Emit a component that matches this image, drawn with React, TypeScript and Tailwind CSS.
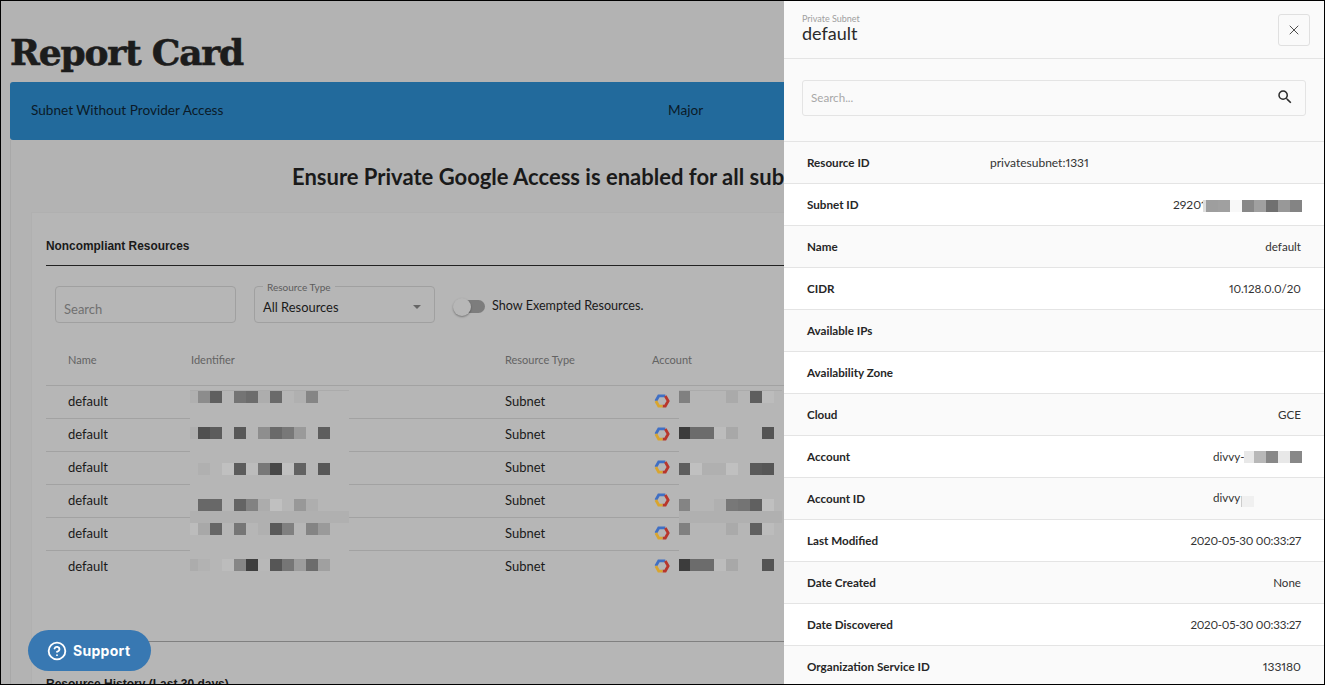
import { CircleHelp, X } from "lucide-react";
import { MdSearch } from "react-icons/md";

const LATO = "font-['Lato',sans-serif]";

// 8px lead block + 12px blocks; "" leaves a gap
const ID_ROWS = [
  { mt: "mt-[4px]", line: true, band: false, cells: ["#b0b0b0", "#8c8c8c", "#5f5f5f", "", "#747474", "#6c6c6c", "#adadad", "#6a6a6a", "", "#b0b0b0", "#858585"] },
  { mt: "mt-[8px]", line: false, band: false, cells: ["#b0b0b0", "#505050", "#5c5c5c", "", "#585858", "", "#8e8e8e", "#6a6a6a", "#787878", "#9a9a9a", "", "#5e5e5e"] },
  { mt: "mt-[11px]", line: false, band: false, cells: ["", "#b0b0b0", "", "#c0c0c0", "#5c5c5c", "#bcbcbc", "#787878", "#484848", "#c0c0c0", "#626262", "", "#585858"] },
  { mt: "mt-[14px]", line: false, band: true, cells: ["", "#686868", "#686868", "", "#646464", "#828282", "#acacac", "#c0c0c0", "", "#989898", "#aeaeae"] },
  { mt: "mt-[5px]", line: false, band: false, cells: ["#bcbcbc", "#a8a8a8", "#666666", "", "#767676", "", "#b0b0b0", "#5a5a5a", "#808080", "", "#848484", "#9a9a9a"] },
  { mt: "mt-[8px]", line: false, band: false, cells: ["#acacac", "#b2b2b2", "", "#bcbcbc", "#868686", "#3e3e3e", "#b8b8b8", "#565656", "#767676", "#9c9c9c", "#6c6c6c", "#a0a0a0"] },
];

const ACCOUNT_ROWS = [
  ["#808080", "", "", "", "#aaaaaa", "", "#5e5e5e", "#bcbcbc"],
  ["#3c3c3c", "#6c6c6c", "#6c6c6c", "#bcbcbc", "#a8a8a8", "", "", "#545454"],
  ["#5e5e5e", "#c0c0c0", "#b0b0b0", "#b0b0b0", "#c0c0c0", "", "#5a5a5a", "#565656"],
  ["#848484", "", "", "#b0b0b0", "#787878", "#747474", "#606060", "#c0c0c0"],
  ["#808080", "", "", "", "#aaaaaa", "", "#606060", "#bcbcbc"],
  ["#3c3c3c", "#6c6c6c", "#6c6c6c", "#bcbcbc", "#a8a8a8", "", "", "#545454"],
];

function Blocks({ cells, first }: { cells: string[]; first: number }) {
  return (
    <div className="flex h-[12px] shrink-0">
      {cells.map((c, i) => (
        <div key={i} className="h-full shrink-0" style={{ width: i === 0 ? first : 12, backgroundColor: c || "transparent" }} />
      ))}
    </div>
  );
}

function GoogleCloud() {
  return (
    <svg width="16" height="16" viewBox="1 1 14 14" fill="none" strokeWidth="2.4" className="mb-[2px]">
      <path d="M2.6 8 L5.1 3.6 H10.9" stroke="#3f6fc4" />
      <path d="M10.9 3.6 L13.4 8 L10.9 12.4 H8.5" stroke="#b8362c" />
      <path d="M2.6 8 L5.1 12.4 H8.5" stroke="#d9a52e" />
    </svg>
  );
}

function ResourceRow({ index }: { index: number }) {
  const row = ID_ROWS[index];
  const border = index < 5 ? "border-b border-[#a2a2a2]" : "border-b border-transparent";
  return (
    <div className="flex h-[33px]">
      <div className={`flex w-[144px] shrink-0 items-center pl-[22px] ${border}`}>default</div>
      <div className={`flex w-[159px] shrink-0 flex-col ${row.mt}`}>
        {row.line && <div className="h-px bg-[#ababab]" />}
        <Blocks cells={row.cells} first={8} />
        {row.band && <div className="h-[12px] shrink-0 bg-[#b0b0b0]" />}
      </div>
      <div className={`flex w-[156px] shrink-0 ${border}`} />
      <div className={`flex w-[147px] shrink-0 items-center ${border}`}>Subnet</div>
      <div className={`flex w-[27px] shrink-0 items-center pl-[2px] ${border}`}>
        <GoogleCloud />
      </div>
      <div className={`flex w-[103px] shrink-0 flex-col ${row.mt}`}>
        {row.line && <div className="h-px bg-[#ababab]" />}
        <Blocks cells={ACCOUNT_ROWS[index]} first={11} />
        {row.band && <div className="h-[12px] shrink-0 bg-[#b0b0b0]" />}
      </div>
    </div>
  );
}

function DetailRow({ label, value, shaded }: { label: string; value?: React.ReactNode; shaded: boolean }) {
  return (
    <div className={`flex h-[42px] shrink-0 items-center justify-between border-t border-[#e4e4e4] pl-[23px] pr-[23px] ${shaded ? "bg-[#fafafa]" : "bg-white"}`}>
      <span className="text-[11.65px] font-bold text-[#262626]">{label}</span>
      {value && <div className="text-[#333333] proportional-nums">{value}</div>}
    </div>
  );
}

export default function App() {
  return (
    <div className={`relative flex h-[685px] w-[1325px] overflow-hidden border border-black bg-[#b3b3b3] ${LATO}`}>
      {/* Dimmed report page */}
      <div className="w-[783px] shrink-0 overflow-hidden text-[#1a1a1a]">
        <div className="flex h-[81px] items-end pb-[10px] pl-[9px]">
          <h1 className="font-['DejaVu_Serif',serif] text-[36px] font-bold leading-[40px] tracking-[-1.2px] text-[#1c1c1c] [-webkit-text-stroke:0.6px_#1c1c1c]">Report Card</h1>
        </div>
        <div className="ml-[9px]">
          <div className="flex h-[58px] items-center rounded-l-[3px] bg-[#226a9c] pb-[2px] pl-[21px] text-[13.6px] text-[#0b1a28]">
            <span className="w-[637px] shrink-0">Subnet Without Provider Access</span>
            <span>Major</span>
          </div>
          <div className="border-l border-[#a8a8a8] pl-[20px]">
            <div className="flex h-[72px] items-center whitespace-nowrap pl-[261px] text-[22px] font-bold">
              Ensure Private Google Access is enabled for all subnets
            </div>
            <div className="border-l border-t border-[#b0b0b0] bg-[#b6b6b6] pl-[14px] text-[13px]">
              <div className="flex h-[53px] items-center border-b border-[#222222] pt-[15px] font-['Liberation_Sans',sans-serif] text-[11.9px] font-bold">
                Noncompliant Resources
              </div>
              <div className="mt-[20px] flex h-[37px] items-stretch pl-[9px]">
                <div className="flex w-[181px] items-end rounded-[4px] border border-[#a0a0a0] pb-[3px] pl-[8px] text-[#707070]">Search</div>
                <div className="relative ml-[18px] flex w-[181px] items-center justify-between rounded-[4px] border border-[#a0a0a0] pl-[8px] pr-[13px] pt-[7px]">
                  <span className="absolute -top-[6px] left-[8px] bg-[#b6b6b6] px-[4px] text-[10px] leading-[13px] text-[#5c5c5c]">Resource Type</span>
                  <span className="text-[12.9px]">All Resources</span>
                  <span className="mb-[2px] h-0 w-0 border-x-[4.5px] border-t-[4.5px] border-x-transparent border-t-[#666666]" />
                </div>
                <div className="relative ml-[18px] flex items-center pt-[3px]">
                  <div className="ml-[7px] h-[13px] w-[25px] rounded-r-full bg-[#7d7d7d]" />
                  <div className="absolute left-0 top-[12px] h-[18px] w-[18px] rounded-full bg-[#b7b7b7] shadow-[0_1px_2px_rgba(0,0,0,0.35)]" />
                  <span className="ml-[7px] text-[12.6px]">Show Exempted Resources.</span>
                </div>
              </div>
              <div className="flex h-[63px] items-end border-b border-[#a2a2a2] pb-[17px] text-[11px] text-[#636363]">
                <span className="w-[145px] shrink-0 pl-[22px]">Name</span>
                <span className="w-[314px] shrink-0">Identifier</span>
                <span className="w-[147px] shrink-0">Resource Type</span>
                <span>Account</span>
              </div>
              {ID_ROWS.map((_, i) => (
                <ResourceRow key={i} index={i} />
              ))}
              <div className="mt-[57px] whitespace-nowrap border-t border-[#808080] pt-[33px] font-['Liberation_Sans',sans-serif] text-[12px] font-bold">
                Resource History (Last 30 days)
              </div>
            </div>
          </div>
        </div>
      </div>

      {/* Detail drawer */}
      <div className="flex w-[540px] shrink-0 flex-col overflow-hidden bg-[#fafafa] text-[11.6px]">
        <div className="flex h-[58px] shrink-0 items-start justify-between border-b border-[#e4e4e4] pl-[18px] pr-[14px]">
          <div className="pt-[12px]">
            <div className="text-[9px] leading-[11px] text-[#a0a0a0]">Private Subnet</div>
            <div className="text-[18px] leading-[18px] text-[#2b2b2b]">default</div>
          </div>
          <div className="mt-[13px] flex h-[32px] w-[32px] items-center justify-center rounded-[3px] border border-[#e0e0e0]">
            <X size={16} strokeWidth={1.3} className="text-[#333333]" />
          </div>
        </div>
        <div className="h-[82px] shrink-0 px-[18px] pt-[21px]">
          <div className="flex h-[36px] items-center justify-between rounded-[3px] border border-[#e4e4e4] pl-[8px] pr-[11px] text-[#a8a8a8]">
            <span>Search...</span>
            <MdSearch size={18} className="mb-[2px] text-[#2b2b2b]" />
          </div>
        </div>
        <DetailRow
          label="Resource ID"
          shaded
          value={<div className="mr-[212px] w-[99px] overflow-hidden whitespace-nowrap text-[12px]">privatesubnet:1331</div>}
        />
        <DetailRow
          label="Subnet ID"
          shaded={false}
          value={
            <div className="-mr-px flex items-center">
              <span className="w-[30px] overflow-hidden whitespace-nowrap text-[12px]">29201</span>
              <div className="mt-[2px]">
                <Blocks cells={["#dddddd", "#9e9e9e", "#a0a0a0", "#f8f8f8", "#888888", "#a0a0a0", "#707070", "#989898", "#848484"]} first={3} />
              </div>
            </div>
          }
        />
        <DetailRow label="Name" shaded value="default" />
        <DetailRow label="CIDR" shaded={false} value="10.128.0.0/20" />
        <DetailRow label="Available IPs" shaded />
        <DetailRow label="Availability Zone" shaded={false} />
        <DetailRow label="Cloud" shaded value="GCE" />
        <DetailRow
          label="Account"
          shaded={false}
          value={
            <div className="-mr-px flex items-center">
              <span className="w-[31px] overflow-hidden">divvy-</span>
              <div className="mt-[2px]">
                <Blocks cells={["#e8e8e8", "#b8b8b8", "#888888", "#e8e8e8", "#888888"]} first={10} />
              </div>
            </div>
          }
        />
        <DetailRow
          label="Account ID"
          shaded
          value={
            <div className="mr-[47px] flex items-start pb-[1px]">
              <span className="w-[28px]">divvy</span>
              <div className="mt-[7px] h-[11px] w-[13px] border-l border-[#cccccc] bg-[#f0f0f0]" />
            </div>
          }
        />
        <DetailRow label="Last Modified" shaded={false} value={<span className="tracking-[-0.25px]">2020-05-30 00:33:27</span>} />
        <DetailRow label="Date Created" shaded value="None" />
        <DetailRow label="Date Discovered" shaded={false} value={<span className="tracking-[-0.25px]">2020-05-30 00:33:27</span>} />
        <DetailRow label="Organization Service ID" shaded value={<span className="text-[12px]">133180</span>} />
      </div>

      {/* Floating help button */}
      <div className="absolute left-[27px] top-[629px] flex h-[41px] w-[123px] items-center rounded-full bg-[#3878b2] pl-[19px] font-['Inter',sans-serif] text-[14px] font-bold text-white">
        <CircleHelp size={20} strokeWidth={2.2} />
        <span className="ml-[6px] tracking-[0.3px]">Support</span>
      </div>
    </div>
  );
}
